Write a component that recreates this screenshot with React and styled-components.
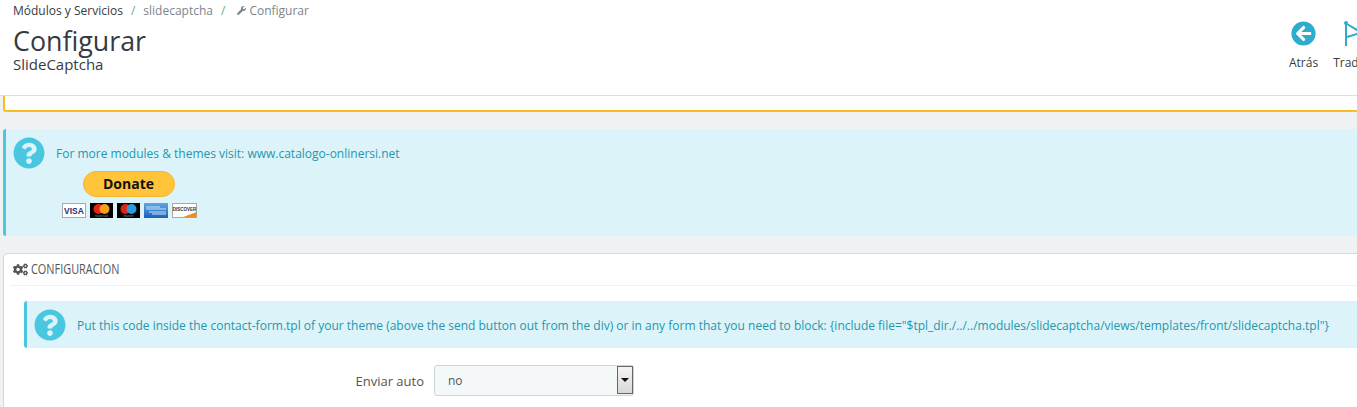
import styled, { createGlobalStyle } from "styled-components";
import { FaArrowCircleLeft, FaCogs, FaQuestionCircle, FaWrench } from "react-icons/fa";

const GlobalStyle = createGlobalStyle`
    html, body {
        margin: 0;
        padding: 0;
        height: 407px;
        overflow: hidden;
        background: #eff1f2;
    }
    body {
        font-family: "Open Sans", "Liberation Sans", sans-serif;
        font-size: 12px;
        color: #555;
    }
`;

const Page = styled.div`
    width: 1357px;
    height: 407px;
    overflow: hidden;
`;

const Header = styled.header`
    display: flex;
    justify-content: space-between;
    height: 95px;
    padding-left: 13px;
    background: #fff;
    border-bottom: 1px solid #dcdfe1;
`;

const Breadcrumb = styled.nav`
    display: flex;
    align-items: center;
    height: 20px;
    font-size: 12px;
`;

const Crumb = styled.span`
    color: ${(p) => (p.$dark ? "#363a41" : "#7d858b")};
    display: inline-flex;
    align-items: center;
    gap: 3px;
    margin-left: ${(p) => (p.$icon ? "4px" : "0")};
`;

const Slash = styled.span`
    color: #6fa88c;
    margin: 0 8px;
`;

const PageTitle = styled.h1`
    margin: 0;
    padding-top: 5px;
    font-size: 26.8px;
    line-height: 31px;
    font-weight: 400;
    color: #363a41;
`;

const SubTitle = styled.div`
    font-size: 15px;
    line-height: 17px;
    color: #363a41;
`;

const Toolbar = styled.div`
    display: flex;
    gap: 15px;
    padding-top: 20px;
    width: 68px;
    flex-shrink: 0;
    overflow: hidden;
`;

const ToolButton = styled.div`
    display: flex;
    flex-direction: column;
    align-items: center;
    gap: 9px;
    font-size: 12px;
    line-height: 15px;
    color: #363a41;
`;

const ToolIcon = styled.div`
    height: 26px;
    display: flex;
    align-items: center;
    color: #2eacce;
`;

const Content = styled.main`
    padding-left: 3px;
`;

const WarningTail = styled.div`
    height: 14px;
    background: #fff;
    border: 2px solid #fbbb22;
    border-top: 0;
    border-right: 0;
    border-bottom-left-radius: 3px;
`;

const InfoBox = styled.div`
    display: flex;
    gap: 11px;
    background: #dcf4f9;
    border-left: 3px solid #4ac7e0;
    border-radius: 3px 0 0 3px;
    color: #2596ad;
    font-size: 12px;
`;

const TopInfo = styled(InfoBox)`
    height: 107px;
    margin-top: 17px;
    padding: 8px 0 0 7px;
    box-sizing: border-box;
`;

const QuestionIcon = styled(FaQuestionCircle)`
    color: #4ac7e0;
    flex-shrink: 0;
`;

const InfoBody = styled.div`
    display: flex;
    flex-direction: column;
    padding-top: 9px;
`;

const InfoText = styled.div`
    line-height: 16px;
`;

const DonateBlock = styled.div`
    display: flex;
    flex-direction: column;
    align-items: center;
    gap: 6px;
    width: 135px;
    margin: 9px 0 0 6px;
`;

const DonateButton = styled.button`
    width: 92px;
    height: 26px;
    margin-left: -2px;
    padding: 0;
    border: 1px solid #f2b632;
    border-radius: 13px;
    background: #ffc439;
    color: #111;
    font-family: "Open Sans", sans-serif;
    font-size: 14px;
    font-weight: 700;
    line-height: 22px;
`;

const Cards = styled.div`
    display: flex;
    gap: 4px;
`;

const Panel = styled.section`
    margin-top: 17px;
    height: 200px;
    padding: 0 0 0 6px;
    background: #fff;
    border: 1px solid #d3d8db;
    border-right: 0;
    border-radius: 5px 0 0 0;
`;

const PanelHeading = styled.div`
    display: flex;
    align-items: center;
    gap: 3px;
    height: 31px;
    padding-left: 3px;
    border-bottom: 1px solid #eff1f2;
    color: #555;
`;

const HeadingText = styled.span`
    display: inline-block;
    margin-bottom: 4px;
    font-family: "Open Sans", sans-serif;
    font-size: 15px;
    transform: scaleX(0.727);
    transform-origin: left center;
`;

const PanelBody = styled.div`
    padding: 15px 0 0 14px;
`;

const CodeInfo = styled(InfoBox)`
    align-items: center;
    height: 47px;
    padding-left: 7px;
    white-space: nowrap;
`;

const CodeText = styled.span`
    margin-top: 2px;
`;

const FormRow = styled.div`
    display: flex;
    align-items: center;
    margin-top: 17px;
`;

const FieldLabel = styled.label`
    width: 410px;
    padding-right: 10px;
    box-sizing: border-box;
    text-align: right;
    font-size: 13px;
    color: #555;
`;

const SelectWrap = styled.div`
    position: relative;
    width: 200px;
    height: 31px;
`;

const NativeSelect = styled.select`
    appearance: none;
    width: 100%;
    height: 100%;
    padding: 0 0 0 13px;
    background: #f5f8f9;
    border: 1px solid #c7d6db;
    border-radius: 3px;
    font-family: "Open Sans", sans-serif;
    font-size: 12px;
    color: #555;
`;

const SelectArrow = styled.div`
    position: absolute;
    top: 1px;
    right: 1px;
    width: 16px;
    height: 28px;
    display: flex;
    align-items: center;
    justify-content: center;
    background: linear-gradient(#f4f4f4, #d8d8d8);
    border: 1px solid #666;
    box-sizing: border-box;
    &::after {
        content: "";
        border-left: 4px solid transparent;
        border-right: 4px solid transparent;
        border-top: 4px solid #111;
    }
`;

const FlagIcon = () => (
    <svg width="24" height="26" viewBox="0 0 24 26" fill="none">
        <circle cx="2" cy="3" r="2" fill="#2eacce" />
        <path d="M2 3v23" stroke="#2eacce" strokeWidth="2" />
        <path d="M3 4l10 6c4 1 7 0 10-1M3 17l10-3c4-1 7 0 10 1M22 9v6" stroke="#2eacce" strokeWidth="2" />
    </svg>
);

const VisaCard = () => (
    <svg width="24" height="15" viewBox="0 0 24 15">
        <rect x="0.5" y="0.5" width="23" height="14" fill="#fff" stroke="#a9a9a9" />
        <text x="12" y="10.8" textAnchor="middle" fontFamily="Liberation Sans" fontSize="8.5" fontWeight="700" fill="#26337a">VISA</text>
    </svg>
);

const MasterCard = ({ left, right, label }) => (
    <svg width="23" height="15" viewBox="0 0 23 15">
        <rect width="23" height="15" fill="#000" />
        <circle cx="8.5" cy="6" r="5" fill={left} />
        <circle cx="14.5" cy="6" r="5" fill={right} />
        <text x="11.5" y="13.8" textAnchor="middle" fontFamily="Liberation Sans" fontSize="2.6" fill="#999">{label}</text>
    </svg>
);

const AmexCard = () => (
    <svg width="24" height="15" viewBox="0 0 24 15">
        <defs>
            <linearGradient id="amex" x1="0" y1="0" x2="0" y2="1">
                <stop offset="0" stopColor="#5fa6e4" />
                <stop offset="1" stopColor="#1c62b8" />
            </linearGradient>
        </defs>
        <rect width="24" height="15" fill="url(#amex)" />
        <path d="M2 4h14M2 6h20M5 9h17M8 11h14" stroke="#cfe2f6" strokeWidth="1" />
    </svg>
);

const DiscoverCard = () => (
    <svg width="25" height="15" viewBox="0 0 25 15">
        <rect x="0.5" y="0.5" width="24" height="14" fill="#fff" stroke="#a9a9a9" />
        <path d="M10 14.5L24.5 9v5.5z" fill="#f08a24" />
        <text x="12.5" y="8" textAnchor="middle" fontFamily="Liberation Sans" fontSize="4.5" fontWeight="700" fill="#333">DISCOVER</text>
    </svg>
);

const App = () => {
    return (
        <Page>
            <GlobalStyle />
            <Header>
                <div>
                    <Breadcrumb>
                        <Crumb $dark>Módulos y Servicios</Crumb>
                        <Slash>/</Slash>
                        <Crumb>slidecaptcha</Crumb>
                        <Slash>/</Slash>
                        <Crumb $icon><FaWrench size={9} /> Configurar</Crumb>
                    </Breadcrumb>
                    <PageTitle>Configurar</PageTitle>
                    <SubTitle>SlideCaptcha</SubTitle>
                </div>
                <Toolbar>
                    <ToolButton>
                        <ToolIcon><FaArrowCircleLeft size={25} /></ToolIcon>
                        Atrás
                    </ToolButton>
                    <ToolButton>
                        <ToolIcon><FlagIcon /></ToolIcon>
                        Traducir
                    </ToolButton>
                </Toolbar>
            </Header>
            <Content>
                <WarningTail />
                <TopInfo>
                    <QuestionIcon size={32} />
                    <InfoBody>
                        <InfoText>For more modules &amp; themes visit: www.catalogo-onlinersi.net</InfoText>
                        <DonateBlock>
                            <DonateButton>Donate</DonateButton>
                            <Cards>
                                <VisaCard />
                                <MasterCard left="#e2231a" right="#f79e1b" label="mastercard" />
                                <MasterCard left="#e2231a" right="#2a9bd8" label="maestro" />
                                <AmexCard />
                                <DiscoverCard />
                            </Cards>
                        </DonateBlock>
                    </InfoBody>
                </TopInfo>
                <Panel>
                    <PanelHeading>
                        <FaCogs size={15} />
                        <HeadingText>CONFIGURACION</HeadingText>
                    </PanelHeading>
                    <PanelBody>
                        <CodeInfo>
                            <QuestionIcon size={32} />
                            <CodeText>Put this code inside the contact-form.tpl of your theme (above the send button out from the div) or in any form that you need to block: {'{include file="$tpl_dir./../../modules/slidecaptcha/views/templates/front/slidecaptcha.tpl"}'}</CodeText>
                        </CodeInfo>
                        <FormRow>
                            <FieldLabel>Enviar auto</FieldLabel>
                            <SelectWrap>
                                <NativeSelect defaultValue="no">
                                    <option value="no">no</option>
                                    <option value="si">si</option>
                                </NativeSelect>
                                <SelectArrow />
                            </SelectWrap>
                        </FormRow>
                    </PanelBody>
                </Panel>
            </Content>
        </Page>
    );
};

export default App;
